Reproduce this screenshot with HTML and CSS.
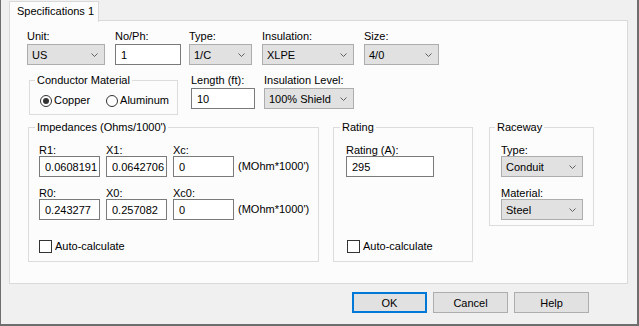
FILE: index.html
```html
<!DOCTYPE html>
<html lang="en">
<head>
    <meta charset="UTF-8">
    <title>Specifications</title>
    <link rel="stylesheet" href="styles.css">
</head>
<body>
    <div class="window">
        <div class="tabs">
            <div class="tab">Specifications 1</div>
        </div>
        <div class="panel">
            <div class="row row-top">
                <div class="field w-unit">
                    <label>Unit:</label>
                    <div class="select"><span>US</span><svg viewBox="0 0 7 4"><polyline points="0.5,0.5 3.5,3.5 6.5,0.5"/></svg></div>
                </div>
                <div class="field w-noph">
                    <label>No/Ph:</label>
                    <input class="text" type="text" value="1">
                </div>
                <div class="field w-type">
                    <label>Type:</label>
                    <div class="select"><span>1/C</span><svg viewBox="0 0 7 4"><polyline points="0.5,0.5 3.5,3.5 6.5,0.5"/></svg></div>
                </div>
                <div class="field w-ins">
                    <label>Insulation:</label>
                    <div class="select"><span>XLPE</span><svg viewBox="0 0 7 4"><polyline points="0.5,0.5 3.5,3.5 6.5,0.5"/></svg></div>
                </div>
                <div class="field w-size">
                    <label>Size:</label>
                    <div class="select"><span>4/0</span><svg viewBox="0 0 7 4"><polyline points="0.5,0.5 3.5,3.5 6.5,0.5"/></svg></div>
                </div>
            </div>

            <div class="row row-mid">
                <fieldset class="group conductor">
                    <legend>Conductor Material</legend>
                    <div class="radios">
                        <div class="choice"><span class="radio checked"></span>Copper</div>
                        <div class="choice"><span class="radio"></span>Aluminum</div>
                    </div>
                </fieldset>
                <div class="field w-length">
                    <label>Length (ft):</label>
                    <input class="text" type="text" value="10">
                </div>
                <div class="field w-level">
                    <label>Insulation Level:</label>
                    <div class="select"><span>100% Shield</span><svg viewBox="0 0 7 4"><polyline points="0.5,0.5 3.5,3.5 6.5,0.5"/></svg></div>
                </div>
            </div>

            <div class="row row-groups">
                <fieldset class="group impedances">
                    <legend>Impedances (Ohms/1000')</legend>
                    <div class="imp-row">
                        <div class="cell"><label>R1:</label><input class="text" type="text" value="0.0608191"></div>
                        <div class="cell"><label>X1:</label><input class="text" type="text" value="0.0642706"></div>
                        <div class="cell"><label>Xc:</label><input class="text" type="text" value="0"></div>
                        <div class="unit">(MOhm*1000')</div>
                    </div>
                    <div class="imp-row second">
                        <div class="cell"><label>R0:</label><input class="text" type="text" value="0.243277"></div>
                        <div class="cell"><label>X0:</label><input class="text" type="text" value="0.257082"></div>
                        <div class="cell"><label>Xc0:</label><input class="text" type="text" value="0"></div>
                        <div class="unit">(MOhm*1000')</div>
                    </div>
                    <div class="choice auto imp-auto"><span class="check"></span>Auto-calculate</div>
                </fieldset>

                <fieldset class="group rating">
                    <legend>Rating</legend>
                    <div class="inner">
                        <label>Rating (A):</label>
                        <input class="text" type="text" value="295">
                    </div>
                    <div class="choice auto rating-auto"><span class="check"></span>Auto-calculate</div>
                </fieldset>

                <fieldset class="group raceway">
                    <legend>Raceway</legend>
                    <div class="inner">
                        <label>Type:</label>
                        <div class="select"><span>Conduit</span><svg viewBox="0 0 7 4"><polyline points="0.5,0.5 3.5,3.5 6.5,0.5"/></svg></div>
                        <label class="next">Material:</label>
                        <div class="select"><span>Steel</span><svg viewBox="0 0 7 4"><polyline points="0.5,0.5 3.5,3.5 6.5,0.5"/></svg></div>
                    </div>
                </fieldset>
            </div>
        </div>

        <div class="buttons">
            <button class="btn default">OK</button>
            <button class="btn">Cancel</button>
            <button class="btn">Help</button>
        </div>
    </div>
</body>
</html>
```

FILE: styles.css
```css
body {
    margin: 0;
    background-color: #f0f0f0;
    font-family: "Liberation Sans", Arial, sans-serif;
    font-size: 11px;
    color: #000000;
}
.window {
    width: 636px;
    height: 324px;
    border-left: 1px solid #6e6e6e;
    border-right: 2px solid #6e6e6e;
    border-bottom: 2px solid #6e6e6e;
    background-color: #f0f0f0;
}

/* tab strip */
.tabs {
    height: 21px;
    padding: 1px 0 0 8px;
    box-sizing: border-box;
}
.tab {
    position: relative;
    z-index: 1;
    width: 90px;
    height: 21px;
    box-sizing: border-box;
    border: 1px solid #d9d9d9;
    border-bottom: none;
    background-color: #fcfcfc;
    padding: 3px 0 0 7px;
    line-height: 13px;
}
.panel {
    margin: -1px 0 0 8px;
    width: 619px;
    height: 264px;
    box-sizing: border-box;
    border: 1px solid #d9d9d9;
    background-color: #fcfcfc;
    padding: 9px 0 0 17px;
}

/* rows and fields */
.row {
    display: flex;
    align-items: flex-start;
}
.field label {
    display: block;
    line-height: 13px;
    margin-bottom: 1px;
}
.w-unit { width: 78px; margin-right: 10px; }
.w-noph { width: 66px; margin-right: 8px; }
.w-type { width: 63px; margin-right: 10px; }
.w-ins { width: 92px; margin-right: 10px; }
.w-size { width: 75px; }
.w-length { width: 64px; margin-left: 13px; }
.w-level { width: 90px; margin-left: 9px; }

.select {
    height: 21px;
    box-sizing: border-box;
    border: 1px solid #adadad;
    background-color: #e1e1e1;
    display: flex;
    align-items: center;
    justify-content: space-between;
    padding: 0 6px 0 4px;
}
.select svg {
    width: 7px;
    height: 4px;
    fill: none;
    stroke: #606060;
    stroke-width: 1;
}
.text {
    display: block;
    width: 100%;
    height: 21px;
    box-sizing: border-box;
    margin: 0;
    border: 1px solid #7a7a7a;
    background-color: #ffffff;
    padding: 0 0 0 5px;
    font-family: "Liberation Sans", Arial, sans-serif;
    font-size: 11px;
    color: #000000;
    outline: none;
}

/* group boxes */
.group {
    margin: 0;
    padding: 0;
    border: 1px solid #dcdcdc;
    box-sizing: border-box;
    min-width: 0;
}
.group legend {
    padding: 0 2px;
    margin-left: 6px;
    line-height: 13px;
}
.row-mid {
    margin-top: 9px;
}
.conductor {
    width: 149px;
    height: 41px;
    margin-left: 2px;
}
.conductor legend {
    margin-left: 5px;
}
.radios {
    display: flex;
    margin: 7px 0 0 10px;
}
.choice {
    display: flex;
    align-items: center;
    line-height: 13px;
}
.radios .choice + .choice {
    margin-left: 16px;
}
.radio {
    width: 12px;
    height: 12px;
    box-sizing: border-box;
    border: 1px solid #333333;
    border-radius: 50%;
    background-color: #ffffff;
    margin-right: 2px;
    display: flex;
    align-items: center;
    justify-content: center;
}
.radio.checked::after {
    content: "";
    width: 6px;
    height: 6px;
    border-radius: 50%;
    background-color: #333333;
}
.check {
    width: 13px;
    height: 13px;
    box-sizing: border-box;
    border: 1px solid #333333;
    background-color: #ffffff;
    margin-right: 3px;
}

.row-groups {
    margin-top: 6px;
}
.impedances {
    width: 291px;
    height: 141px;
    margin-left: 1px;
}
.rating {
    width: 140px;
    height: 141px;
    margin-left: 14px;
}
.raceway {
    width: 105px;
    height: 105px;
    margin-left: 16px;
}
.raceway legend {
    margin-left: 5px;
}

.imp-row {
    display: flex;
    align-items: flex-end;
    margin: 10px 0 0 10px;
}
.imp-row.second {
    margin-top: 10px;
}
.cell {
    width: 61px;
    margin-right: 6px;
}
.cell label,
.inner label {
    display: block;
    line-height: 12px;
}
.unit {
    height: 21px;
    line-height: 21px;
    margin-left: -2px;
}
.imp-auto {
    margin: 20px 0 0 10px;
}

.rating .inner {
    margin: 10px 0 0 12px;
    width: 88px;
}
.rating-auto {
    margin: 63px 0 0 13px;
}
.raceway .inner {
    margin: 10px 0 0 11px;
    width: 82px;
}
.raceway label.next {
    margin-top: 10px;
}

/* dialog buttons */
.buttons {
    display: flex;
    padding-left: 351px;
    margin-top: 8px;
}
.btn {
    width: 75px;
    height: 21px;
    margin: 0 6px 0 0;
    padding: 0;
    box-sizing: border-box;
    border: 1px solid #adadad;
    background-color: #e1e1e1;
    font-family: "Liberation Sans", Arial, sans-serif;
    font-size: 11px;
    color: #000000;
}
.btn.default {
    border: 2px solid #0078d7;
}
```
